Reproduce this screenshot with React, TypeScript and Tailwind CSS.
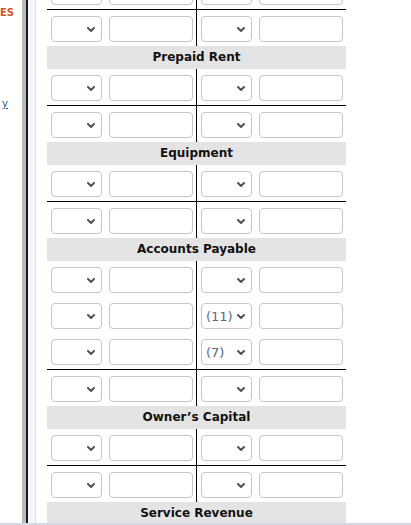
import React from "react";

type Cell = { sel?: string };
type Line = { left?: Cell; right?: Cell };

const accounts: { title: string; rows: Line[] }[] = [
  { title: "Prepaid Rent", rows: [{}] },
  { title: "Equipment", rows: [{}] },
  {
    title: "Accounts Payable",
    rows: [{}, { right: { sel: "(11)" } }, { right: { sel: "(7)" } }],
  },
  { title: "Owner\u2019s Capital", rows: [{}] },
];

const Chevron = () => (
  <svg width="8" height="5" viewBox="0 0 8 5" className="shrink-0">
    <path
      d="M1 1 L4 4 L7 1"
      fill="none"
      stroke="#555"
      strokeWidth="2"
      strokeLinecap="round"
      strokeLinejoin="round"
    />
  </svg>
);

const Select = ({ value }: { value?: string }) => (
  <div className="flex h-[26px] w-[51px] shrink-0 items-center justify-between rounded-[4px] border border-[#c6c6c6] bg-white pl-[4px] pr-[6px]">
    <span className="text-[13px] leading-none text-[#5b6a7e]">{value ?? ""}</span>
    <Chevron />
  </div>
);

const Field = () => (
  <div className="h-[26px] w-[84px] shrink-0 rounded-[4px] border border-[#c6c6c6] bg-white" />
);

const Row = ({ line = {} }: { line?: Line }) => (
  <div className="flex h-[36px]">
    <div className="flex w-[150px] items-start gap-[7px] border-r border-black pl-[4px] pt-[6px]">
      <Select value={line.left?.sel} />
      <Field />
    </div>
    <div className="flex w-[149px] items-start gap-[7px] pl-[4px] pt-[6px]">
      <Select value={line.right?.sel} />
      <Field />
    </div>
  </div>
);

const Band = ({ title }: { title: string }) => (
  <div className="flex h-[23px] items-center justify-center bg-[#e4e4e4] pb-[2px] text-[12px] font-bold text-[#111]">
    {title}
  </div>
);

const Account = ({ title, rows }: { title: string; rows: Line[] }) => (
  <section>
    <Band title={title} />
    <div className="border-b border-black">
      {rows.map((r, i) => (
        <Row key={i} line={r} />
      ))}
    </div>
    <Row />
  </section>
);

export default function App() {
  return (
    <div
      className="flex h-[525px] w-[411px] flex-col overflow-hidden bg-white"
      style={{ fontFamily: '"DejaVu Sans", Verdana, sans-serif' }}
    >
      <div className="flex h-[523px]">
        <aside className="flex w-[22px] flex-col">
          <div className="pt-[6px] text-[10px] font-bold leading-[14px] text-[#d9531e]">
            ES
          </div>
          <div className="mt-[77px] pl-[2px] text-[10px] leading-[14px] text-[#1f5c99] underline">
            y
          </div>
        </aside>
        <div className="w-[4px] bg-[#bababa]" />
        <div className="w-[2px] bg-[#1a1a1a]" />
        <div className="w-[8px] border-r border-[#dce3ec] bg-[#f3f6fb]" />
        <main className="ml-[11px] w-[299px]">
          <div className="mt-[-27px]">
            <div className="border-b border-black">
              <Row />
            </div>
            <Row />
          </div>
          {accounts.map((a) => (
            <Account key={a.title} title={a.title} rows={a.rows} />
          ))}
          <Band title="Service Revenue" />
        </main>
      </div>
      <div className="h-[2px] bg-[#d3dae4]" />
    </div>
  );
}
